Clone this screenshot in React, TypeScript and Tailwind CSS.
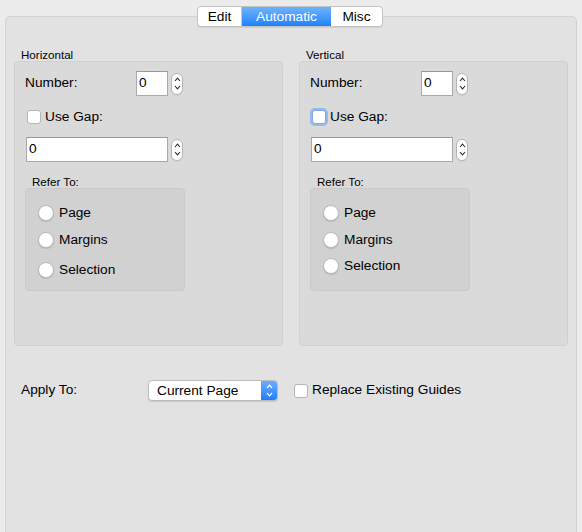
import React from "react";

const font = { fontFamily: '"Liberation Sans", Arial, sans-serif' };

function Stepper() {
  return (
    <div className="ml-[3px] flex h-[22px] w-[12px] flex-col items-center justify-center gap-[3px] rounded-[6px] border border-[#b5b5b5] bg-white shadow-[0_1px_0_rgba(0,0,0,0.05)]">
      <svg width="7" height="5" viewBox="0 0 7 5">
        <path d="M1 4 L3.5 1.2 L6 4" fill="none" stroke="#2a2a2a" strokeWidth="1.1" />
      </svg>
      <svg width="7" height="5" viewBox="0 0 7 5">
        <path d="M1 1 L3.5 3.8 L6 1" fill="none" stroke="#2a2a2a" strokeWidth="1.1" />
      </svg>
    </div>
  );
}

function Field({ w }: { w: string }) {
  return (
    <div className={`flex h-[25px] ${w} items-center border border-[#a9a9a9] border-t-[#989898] bg-white pl-[2px] text-[13.7px] text-black`}>
      0
    </div>
  );
}

function Radio({ label, mt }: { label: string; mt: string }) {
  return (
    <div className={`flex items-center ${mt}`}>
      <div className="h-[16px] w-[16px] rounded-full border border-[#b9b9b9] bg-white shadow-[0_1px_1px_rgba(0,0,0,0.12)]" />
      <span className="ml-[5px] text-[13.7px] leading-[16px] text-black">{label}</span>
    </div>
  );
}

function Group({ title, focus, gaps }: { title: string; focus?: boolean; gaps: string[] }) {
  return (
    <div className="flex w-[270px] flex-col">
      <div className="h-[13px] pl-[7px] text-[11.6px] leading-[13px] text-black">{title}</div>
      <div className="h-[285px] rounded-[4px] border border-[#d0d0d0] bg-[#dadada] pl-[10px] pt-[9px]">
        <div className="flex h-[25px] items-center">
          <span className="w-[111px] text-[13.7px] text-black">Number:</span>
          <Field w="w-[32px]" />
          <Stepper />
        </div>
        <div className="mt-[14px] flex h-[14px] items-center pl-[2px]">
          <div
            className={
              focus
                ? "h-[14px] w-[14px] rounded-[3px] border border-[#7fa9e6] bg-white shadow-[0_0_0_2px_rgba(104,157,236,0.55)]"
                : "h-[14px] w-[14px] rounded-[3px] border border-[#b5b5b5] bg-white"
            }
          />
          <span className="ml-[4px] text-[13.7px] text-black">Use Gap:</span>
        </div>
        <div className="mt-[13px] flex h-[25px] items-center pl-[1px]">
          <Field w="w-[142px]" />
          <Stepper />
        </div>
        <div className="mt-[13px] h-[13px] pl-[7px] text-[11.6px] leading-[13px] text-black">Refer To:</div>
        <div className="h-[103px] w-[160px] rounded-[4px] border border-[#cacaca] bg-[#d1d1d1] pl-[12px] pt-[16px]">
          <Radio label="Page" mt="mt-0" />
          <Radio label="Margins" mt={gaps[0]} />
          <Radio label="Selection" mt={gaps[1]} />
        </div>
      </div>
    </div>
  );
}

export default function App() {
  return (
    <div className="relative h-[532px] w-[582px] overflow-hidden bg-[#ececec] px-[5px] pt-[16px]" style={font}>
      {/* tab bar */}
      <div className="absolute left-[197px] top-[6px] flex h-[21px] overflow-hidden rounded-[4px] border border-[#c3c3c3] bg-white text-[13.7px] leading-[19px] shadow-[0_1px_0_rgba(0,0,0,0.08)]">
        <div className="w-[44px] border-r border-[#c8c8c8] text-center text-black">Edit</div>
        <div className="w-[89px] bg-gradient-to-b from-[#6db3fb] to-[#1b82fb] text-center text-white">Automatic</div>
        <div className="w-[51px] text-center text-black">Misc</div>
      </div>

      {/* tab content */}
      <div className="h-[540px] rounded-[5px] border border-[#d3d3d3] bg-[#e2e2e2] pl-[8px] pr-[8px] pt-[31px]">
        <div className="flex gap-[16px]">
          <Group title="Horizontal" gaps={["mt-[11px]", "mt-[14px]"]} />
          <Group title="Vertical" focus gaps={["mt-[11px]", "mt-[10px]"]} />
        </div>

        <div className="mt-[34px] flex h-[21px] items-center pl-[7px]">
          <span className="w-[127px] text-[13.7px] text-black">Apply To:</span>
          <div className="flex h-[21px] w-[130px] items-stretch overflow-hidden rounded-[4px] border border-[#bdbdbd] bg-white shadow-[0_1px_1px_rgba(0,0,0,0.12)]">
            <span className="flex-1 pl-[8px] text-[13.7px] leading-[19px] text-black">Current Page</span>
            <div className="flex w-[16px] flex-col items-center justify-center gap-[3px] bg-gradient-to-b from-[#69aefa] to-[#1d7ff9]">
              <svg width="7" height="5" viewBox="0 0 7 5">
                <path d="M1 4 L3.5 1.2 L6 4" fill="none" stroke="#fff" strokeWidth="1.2" />
              </svg>
              <svg width="7" height="5" viewBox="0 0 7 5">
                <path d="M1 1 L3.5 3.8 L6 1" fill="none" stroke="#fff" strokeWidth="1.2" />
              </svg>
            </div>
          </div>
          <div className="ml-[16px] h-[14px] w-[14px] rounded-[3px] border border-[#b5b5b5] bg-white" />
          <span className="ml-[4px] text-[13.7px] text-black">Replace Existing Guides</span>
        </div>
      </div>
    </div>
  );
}
